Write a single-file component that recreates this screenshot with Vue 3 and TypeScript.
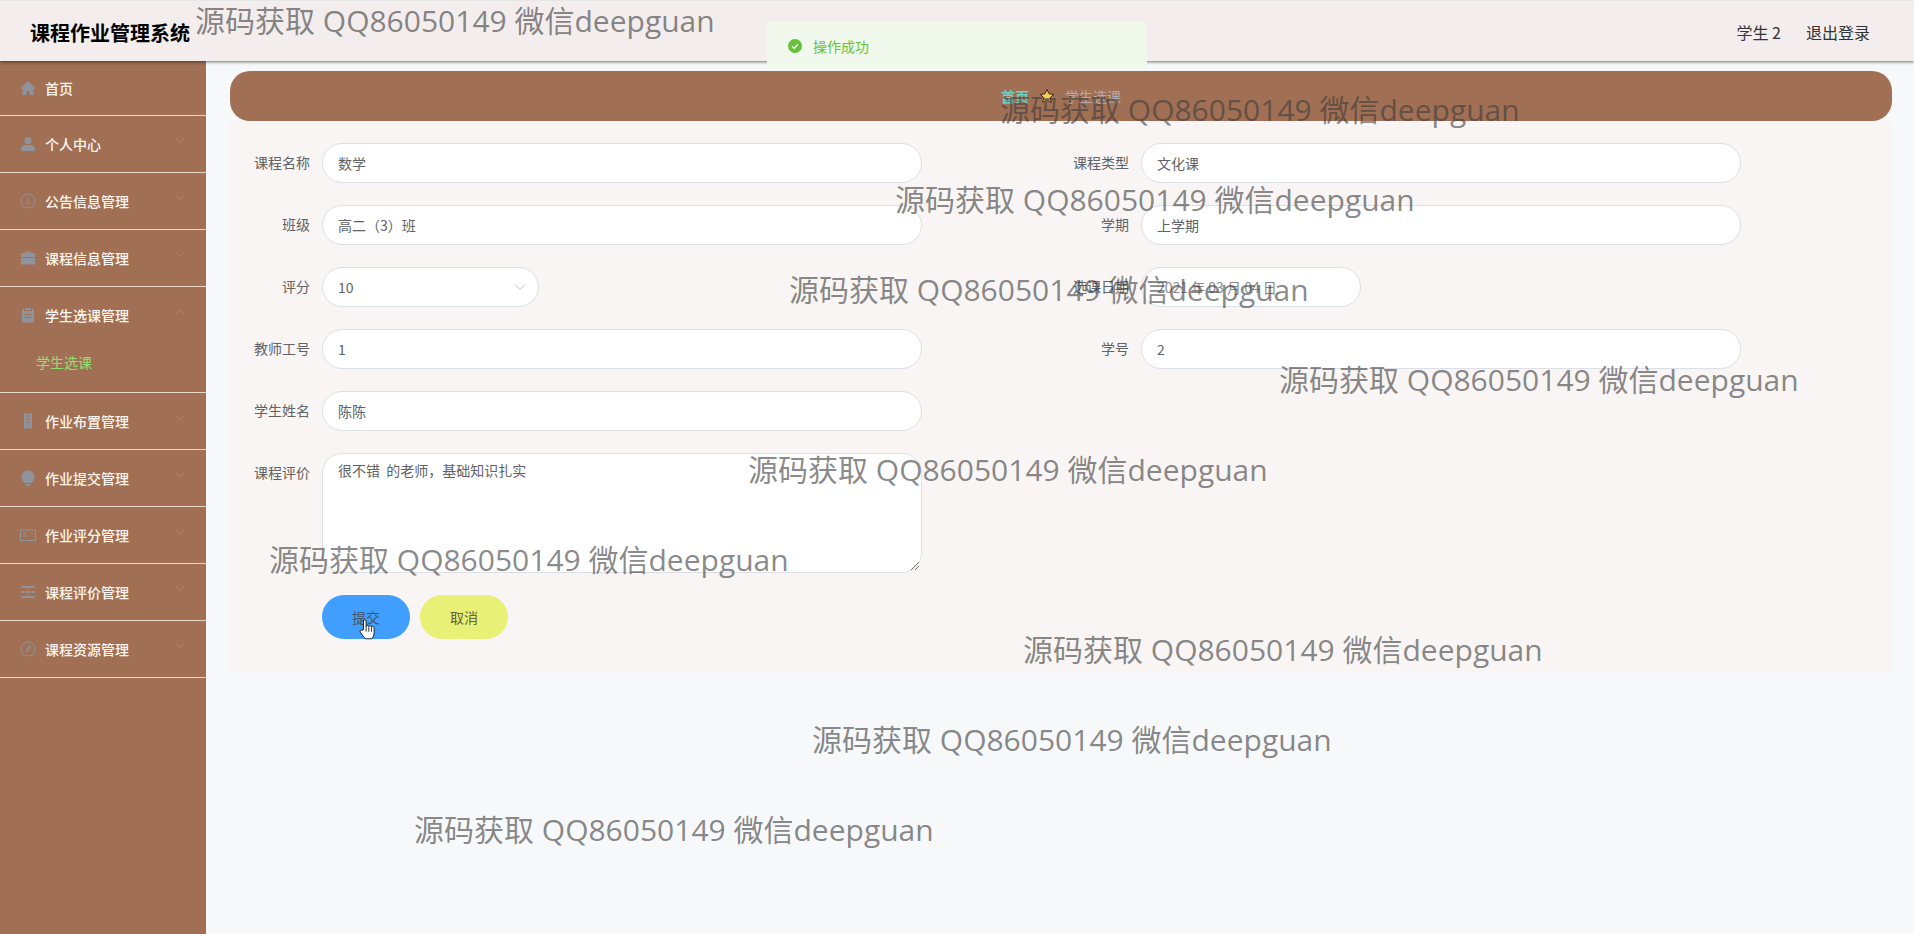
<script setup lang="ts">
interface MenuItem {
  title: string;
  icon: string;
  arrow?: boolean;
  open?: boolean;
  children?: string[];
}

const menus: MenuItem[] = [
  { title: "首页", icon: "home" },
  { title: "个人中心", icon: "user", arrow: true },
  { title: "公告信息管理", icon: "notice", arrow: true },
  { title: "课程信息管理", icon: "case", arrow: true },
  { title: "学生选课管理", icon: "clip", arrow: true, open: true, children: ["学生选课"] },
  { title: "作业布置管理", icon: "phone", arrow: true },
  { title: "作业提交管理", icon: "bulb", arrow: true },
  { title: "作业评分管理", icon: "card", arrow: true },
  { title: "课程评价管理", icon: "list", arrow: true },
  { title: "课程资源管理", icon: "compass", arrow: true },
];

const marks = [
  { x: 195, y: 0 },
  { x: 1000, y: 89 },
  { x: 895, y: 179 },
  { x: 789, y: 269 },
  { x: 1279, y: 359 },
  { x: 748, y: 449 },
  { x: 269, y: 539 },
  { x: 1023, y: 629 },
  { x: 812, y: 719 },
  { x: 414, y: 809 },
];
</script>

<template>
  <div class="page">
    <header class="top">
      <div class="brand">课程作业管理系统</div>
      <div class="user">
        <span>学生 2</span>
        <span>退出登录</span>
      </div>
    </header>

    <div class="body">
      <aside class="side">
        <div v-for="m in menus" :key="m.title" class="group">
          <div class="item">
            <svg class="ico" viewBox="0 0 16 16" aria-hidden="true">
              <path v-if="m.icon === 'home'" d="M8 1 .5 8l1 .8L2.5 8v7h4v-4h3v4h4V8l1 .8 1-.8z" />
              <template v-else-if="m.icon === 'user'">
                <circle cx="8" cy="4.5" r="3.5" />
                <path d="M1 15v-2.5C1 10 3.5 9 8 9s7 1 7 3.500V15z" />
              </template>
              <g v-else-if="m.icon === 'notice'" class="line">
                <circle cx="8" cy="8" r="7" />
                <path d="M8 4v6M5.500 11h3" />
              </g>
              <path v-else-if="m.icon === 'case'" d="M5 3V1.500h6V3h4v4H1V3zm1-.5V3h4v-.5zM1 8h14v6.500H1z" />
              <path v-else-if="m.icon === 'clip'" d="M5 1h6v2H5zM2 2h2v2h8V2h2v13.500H2zm2.500 5v1h7V7zm0 3v1h7v-1z" />
              <path v-else-if="m.icon === 'phone'" d="M4 .5h8V15.500H4zM5.500 2.500v1h5v-1zm0 3v1h5v-1zm0 3v1h5v-1zm2 4v1h1v-1z" />
              <path v-else-if="m.icon === 'bulb'" d="M8 .5a6.500 6.500 0 0 1 3.500 12V13h-7v-.5A6.500 6.500 0 0 1 8 .5zM5.500 14h5v1l-1 .8h-3l-1-.8z" />
              <g v-else-if="m.icon === 'card'" class="line">
                <rect x=".5" y="3" width="15" height="10.500" />
                <path d="M3 6h3M3 9h5M11 6.500h2" />
              </g>
              <path v-else-if="m.icon === 'list'" d="M1 2h14v2H1zM1 7h3v2H1zm4.500 0h4v2h-4zM11 7h4v2h-4zM1 12h14v2H1z" />
              <g v-else class="line">
                <circle cx="8" cy="8" r="7" />
                <path d="M10.500 5 9 9 6 11l1-4z" />
              </g>
            </svg>
            <span class="label">{{ m.title }}</span>
            <svg v-if="m.arrow" class="arrow" viewBox="0 0 12 8" aria-hidden="true">
              <path :d="m.open ? 'M1 6.500 6 1.500l5 5' : 'M1 1.500 6 6.500l5-5'" />
            </svg>
          </div>
          <div v-for="c in m.children" :key="c" class="sub">{{ c }}</div>
        </div>
      </aside>

      <main class="main">
        <div class="crumb">
          <span class="crumb-home">首页</span>
          <svg class="star" viewBox="0 0 16 16" aria-hidden="true">
            <path d="m8 1.500 2 4.300 4.700.6-3.400 3.200.9 4.700L8 12l-4.200 2.300.9-4.700L1.300 6.400 6 5.800z" />
          </svg>
          <span class="crumb-cur">学生选课</span>
        </div>

        <form class="card" @submit.prevent>
          <div class="row">
            <div class="field">
              <label>课程名称</label>
              <div class="box">数学</div>
            </div>
            <div class="field">
              <label>课程类型</label>
              <div class="box">文化课</div>
            </div>
          </div>
          <div class="row">
            <div class="field">
              <label>班级</label>
              <div class="box">高二（3）班</div>
            </div>
            <div class="field">
              <label>学期</label>
              <div class="box">上学期</div>
            </div>
          </div>
          <div class="row">
            <div class="field">
              <label>评分</label>
              <div class="box box-select">
                10
                <svg class="caret" viewBox="0 0 12 8" aria-hidden="true"><path d="M1 1.500 6 6.500l5-5" /></svg>
              </div>
            </div>
            <div class="field">
              <label>选课日期</label>
              <div class="box box-date">2021 年 03 月 04 日</div>
            </div>
          </div>
          <div class="row">
            <div class="field">
              <label>教师工号</label>
              <div class="box">1</div>
            </div>
            <div class="field">
              <label>学号</label>
              <div class="box">2</div>
            </div>
          </div>
          <div class="row">
            <div class="field">
              <label>学生姓名</label>
              <div class="box">陈陈</div>
            </div>
          </div>
          <div class="row">
            <div class="field">
              <label>课程评价</label>
              <div class="box box-area">
                很不错&nbsp; 的老师，基础知识扎实
                <svg class="grip" viewBox="0 0 8 8" aria-hidden="true"><path d="M8 0 0 8M8 4 4 8" /></svg>
              </div>
            </div>
          </div>
          <div class="btns">
            <button type="button" class="btn btn-ok">
              提交
              <svg class="hand" viewBox="0 0 18 24" aria-hidden="true">
                <path d="M5 13V3a1.500 1.500 0 0 1 3 0v6.500c0-1.800 3-1.800 3 0 0-1.600 3-1.600 3 .3 0-1.200 3-1 3 .7V16c0 3.500-1.800 6.500-3 7H7.500C5.500 21.500 4 19 1.500 15.500c-1-1.500.8-3.300 2.200-2z" />
                <path d="M8 10v5M11 10v5M14 10v5" />
              </svg>
            </button>
            <button type="button" class="btn btn-no">取消</button>
          </div>
        </form>
      </main>
    </div>

    <div class="toast">
      <svg class="toast-ico" viewBox="0 0 16 16" aria-hidden="true">
        <circle cx="8" cy="8" r="7" />
        <path d="m5 8.200 2.200 2L11 6.200" />
      </svg>
      <span>操作成功</span>
    </div>

    <div
      v-for="(w, i) in marks"
      :key="i"
      class="mark"
      :style="{ left: w.x + 'px', top: w.y + 'px' }"
    >源码获取 QQ86050149 微信deepguan</div>
  </div>
</template>

<style>
html,
body {
  margin: 0;
  background: #f7f8fa;
}
</style>

<style scoped>
.page {
  position: relative;
  width: 1914px;
  height: 934px;
  overflow: hidden;
  background: #f7f8fa;
  font-family: "Noto Sans CJK SC", "Open Sans", sans-serif;
  font-size: 14px;
  color: #606266;
}

.top {
  position: relative;
  z-index: 2;
  display: flex;
  align-items: center;
  justify-content: space-between;
  box-sizing: border-box;
  height: 61px;
  padding: 2px 44px 0 30px;
  background: #f3eded;
  border-top: 1px solid #e6e6e6;
  box-shadow: 0 1px 3px rgb(0 0 0 / 0.55);
}

.brand {
  font-size: 20px;
  font-weight: 700;
  color: #000;
}

.user {
  display: flex;
  gap: 25px;
  font-size: 16px;
  color: #333;
}

.body {
  display: flex;
  height: 873px;
}

.side {
  flex: none;
  width: 206px;
  background: #a06f54;
}

.group {
  border-bottom: 1px solid #e9d6c9;
}

.group:first-child .item {
  height: 54px;
  padding-bottom: 0;
}

.item {
  position: relative;
  display: flex;
  align-items: center;
  box-sizing: border-box;
  height: 56px;
  padding: 0 0 0 20px;
  color: #fdf6f0;
}

.ico {
  flex: none;
  width: 16px;
  height: 16px;
  margin-right: 9px;
  fill: #90939b;
}

.line {
  fill: none;
  stroke: #90939b;
  stroke-width: 1;
}

.label {
  font-size: 14px;
  font-weight: 500;
}

.arrow {
  position: absolute;
  right: 21px;
  top: 21px;
  width: 10px;
  height: 7px;
  fill: none;
  stroke: #b78a72;
  stroke-width: 1;
}

.sub {
  height: 50px;
  padding: 0 0 0 36px;
  margin-top: -1px;
  line-height: 40px;
  font-size: 14px;
  color: #8fe06f;
}

.main {
  flex: 1;
  min-width: 0;
  padding: 10px 22px 0 24px;
}

.crumb {
  display: flex;
  align-items: center;
  justify-content: center;
  gap: 10px;
  height: 50px;
  padding-left: 0;
  border-radius: 20px;
  background: #a06f54;
  font-size: 14px;
}

.crumb-home {
  font-weight: 700;
  color: #6fd0c6;
}

.crumb-cur {
  color: #b0abb3;
}

.star {
  width: 16px;
  height: 16px;
  fill: #f7cf58;
  stroke: #3a2a1a;
  stroke-width: 1;
}

.card {
  height: 552px;
  box-sizing: border-box;
  padding: 22px 0 0;
  background: #f8f5f4;
}

.row {
  display: grid;
  grid-template-columns: 819px 1fr;
  margin-bottom: 22px;
}

.field {
  display: flex;
  align-items: flex-start;
}

.field label {
  flex: none;
  box-sizing: border-box;
  width: 92px;
  padding-right: 12px;
  line-height: 38px;
  text-align: right;
  font-size: 14px;
  color: #606266;
}

.box {
  position: relative;
  box-sizing: border-box;
  width: 600px;
  height: 40px;
  padding: 0 15px;
  border: 1px solid #dcdfe6;
  border-radius: 20px;
  background: #fff;
  line-height: 38px;
  font-size: 14px;
  color: #606266;
}

.box-select {
  width: 217px;
}

.box-date {
  width: 220px;
  color: #8a8a8a;
}

.box-area {
  height: 120px;
  padding-top: 2px;
  line-height: 28px;
}

.caret {
  position: absolute;
  right: 12px;
  top: 15px;
  width: 12px;
  height: 8px;
  fill: none;
  stroke: #c0c4cc;
  stroke-width: 1;
}

.grip {
  position: absolute;
  right: 2px;
  bottom: 2px;
  width: 8px;
  height: 8px;
  fill: none;
  stroke: #777;
  stroke-width: 1;
}

.btns {
  display: flex;
  gap: 10px;
  padding-left: 92px;
}

.btn {
  position: relative;
  width: 88px;
  height: 44px;
  padding: 0;
  border: 0;
  border-radius: 22px;
  font-family: inherit;
  font-size: 14px;
  color: #44546a;
}

.btn-ok {
  background: #409eff;
}

.btn-no {
  background: #e9f076;
  color: #606240;
}

.hand {
  position: absolute;
  left: 37px;
  top: 23px;
  width: 16px;
  height: 22px;
  fill: #fff;
  stroke: #111;
  stroke-width: 1;
}

.toast {
  position: absolute;
  z-index: 3;
  left: 767px;
  top: 22px;
  display: flex;
  align-items: center;
  box-sizing: border-box;
  width: 380px;
  height: 47px;
  padding-left: 20px;
  border-radius: 4px;
  background: #f0f9eb;
  font-size: 14px;
  color: #67c23a;
}

.toast-ico {
  width: 16px;
  height: 16px;
  margin-right: 10px;
  fill: #67c23a;
}

.toast-ico path {
  fill: none;
  stroke: #f0f9eb;
  stroke-width: 1.500;
}

.mark {
  position: absolute;
  z-index: 4;
  white-space: nowrap;
  font-family: "Open Sans", "Noto Sans CJK SC", sans-serif;
  font-size: 30px;
  line-height: 42px;
  color: rgb(60 60 60 / 0.62);
  pointer-events: none;
}
</style>
